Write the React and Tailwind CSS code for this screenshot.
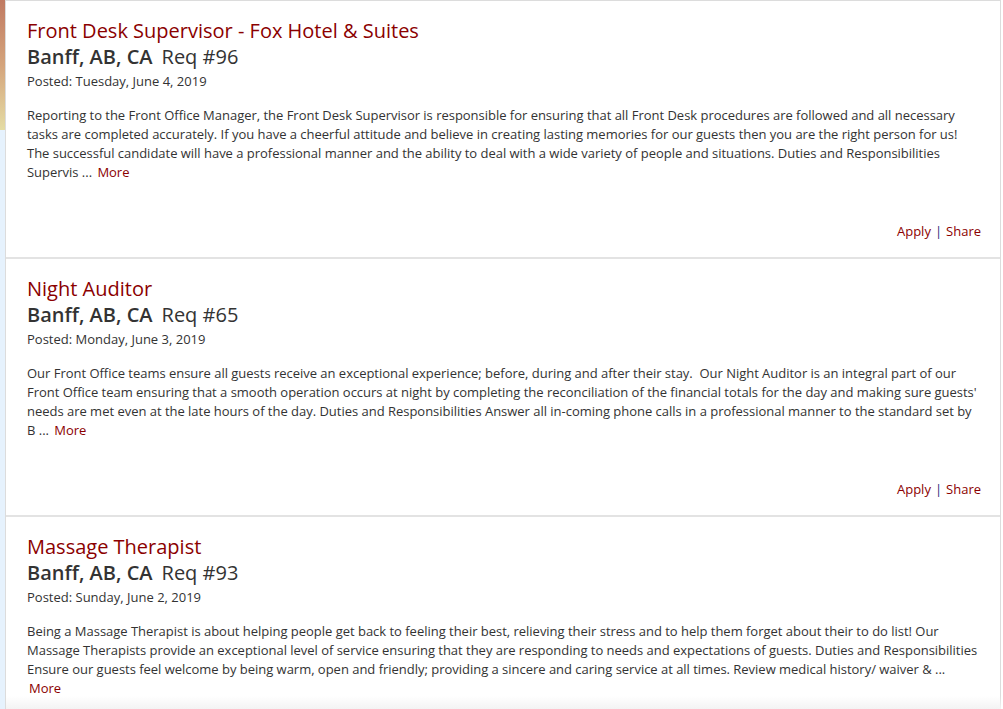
import React from "react";

const JOBS = [
  {
    title: "Front Desk Supervisor - Fox Hotel & Suites",
    location: "Banff, AB, CA",
    req: "96",
    posted: "Tuesday, June 4, 2019",
    summary:
      "Reporting to the Front Office Manager, the Front Desk Supervisor is responsible for ensuring that all Front Desk procedures are followed and all necessary tasks are completed accurately. If you have a cheerful attitude and believe in creating lasting memories for our guests then you are the right person for us! The successful candidate will have a professional manner and the ability to deal with a wide variety of people and situations. Duties and Responsibilities Supervis ...",
  },
  {
    title: "Night Auditor",
    location: "Banff, AB, CA",
    req: "65",
    posted: "Monday, June 3, 2019",
    summary:
      "Our Front Office teams ensure all guests receive an exceptional experience; before, during and after their stay.\u00a0 Our Night Auditor is an integral part of our Front Office team ensuring that a smooth operation occurs at night by completing the reconciliation of the financial totals for the day and making sure guests' needs are met even at the late hours of the day. Duties and Responsibilities Answer all in-coming phone calls in a professional manner to the standard set by B ...",
  },
  {
    title: "Massage Therapist",
    location: "Banff, AB, CA",
    req: "93",
    posted: "Sunday, June 2, 2019",
    summary:
      "Being a Massage Therapist is about helping people get back to feeling their best, relieving their stress and to help them forget about their to do list! Our Massage Therapists provide an exceptional level of service ensuring that they are responding to needs and expectations of guests. Duties and Responsibilities Ensure our guests feel welcome by being warm, open and friendly; providing a sincere and caring service at all times. Review medical history/ waiver & ...",
  },
];

const JobCard = ({ job }) => (
  <div className="border-b-2 border-[#e3e3e3] pl-[21px] pr-[19px] pt-[17px] pb-[16px]">
    <h2 className="text-[20px] leading-[26px] text-[#8b0000]">{job.title}</h2>
    <div className="text-[20px] leading-[26px] text-[#333]">
      <span className="font-semibold">{job.location}</span>
      <span className="ml-[9px]">Req #{job.req}</span>
    </div>
    <div className="text-[13px] leading-[22px] text-[#333]">Posted: {job.posted}</div>
    <p className="mt-[14px] text-[13px] leading-[19px] tracking-[-0.02px] text-[#333]">
      {job.summary}{" "}
      <a href="#" className="ml-[2px] text-[#8b0000]">
        More
      </a>
    </p>
    <div className="mt-[40px] text-right text-[13px] leading-[19px]">
      <a href="#" className="text-[#8b0000]">
        Apply
      </a>
      <span className="mx-[4px] text-[#2a2a7a]">|</span>
      <a href="#" className="text-[#8b0000]">
        Share
      </a>
    </div>
  </div>
);

export default function App() {
  return (
    <div className="relative flex h-[709px] overflow-hidden bg-white font-['Open_Sans',sans-serif]">
      <div className="flex w-[5px] shrink-0 flex-col">
        <div className="h-[130px] bg-gradient-to-b from-[#c07a62] via-[#d4a47c] to-[#e4dca4]" />
        <div className="flex-1 bg-[#e6f2fd]" />
      </div>
      <div className="w-[996px] border-l border-r border-t border-[#dcdcdc]">
        {JOBS.map((job) => (
          <JobCard key={job.req} job={job} />
        ))}
      </div>
      {/* bottom scroll fade */}
      <div className="pointer-events-none absolute bottom-0 left-[6px] right-[2px] h-[13px] bg-gradient-to-b from-white/0 to-[#f3f3f3]" />
    </div>
  );
}
